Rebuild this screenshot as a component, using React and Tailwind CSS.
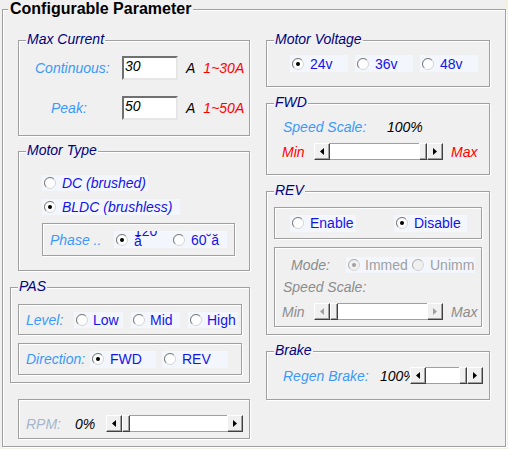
import React from 'react';

const Radio = ({ checked, disabled }) => (
  <svg width="12" height="12" viewBox="0 0 12 12" className="shrink-0">
    <circle cx="6" cy="6" r="5.5" fill={disabled ? '#f0f0f0' : '#fff'} stroke="#d4d4d4" />
    <path d="M2.1 9.9 A5.5 5.5 0 0 1 9.9 2.1" fill="none" stroke={disabled ? '#b4b4b4' : '#7a7a7a'} />
    {checked && <circle cx="6" cy="6" r="2" fill={disabled ? '#a0a0a0' : '#000'} />}
  </svg>
);

const Option = ({ className, checked, label, italic, gap = 'ml-[6px]' }) => (
  <div className={`flex items-center bg-[#f3f7fd] pl-[2px] ${className}`}>
    <Radio checked={checked} />
    <span className={`${gap} whitespace-nowrap text-[14px] leading-[16px] text-[#1414e6] ${italic ? 'italic' : ''}`}>{label}</span>
  </div>
);

const Box = ({ title, className = '', children }) => (
  <div className={`relative border border-[#a0a0a0] shadow-[1px_1px_0_#fff,inset_1px_1px_0_#fff] ${className}`}>
    {title && (
      <span className="absolute -top-[10px] left-[7px] bg-[#f0f0f0] px-[1px] text-[14px] italic leading-[16px] text-[#000080]">
        {title}
      </span>
    )}
    {children}
  </div>
);

const raised =
  'h-full shrink-0 border border-t-white border-l-white border-r-[#404040] border-b-[#404040] bg-[#f0f0f0] shadow-[inset_-1px_-1px_0_#a0a0a0]';

const Arrow = ({ dir, disabled }) => (
  <div className={`flex w-[16px] items-center justify-center ${raised}`}>
    <svg width="4" height="7" viewBox="0 0 4 7">
      <path d={dir === 'left' ? 'M4 0 L0 3.5 L4 7Z' : 'M0 0 L4 3.5 L0 7Z'} fill={disabled ? '#a0a0a0' : '#000'} />
    </svg>
  </div>
);

const Scroll = ({ className, thumb, disabled }) => (
  <div className={`relative flex h-[17px] ${className}`}>
    <Arrow dir="left" disabled={disabled} />
    {thumb === 'left' && <div className={`w-[8px] ${raised}`} />}
    <div className="flex-1 border-y border-[#a0a0a0] bg-white" />
    {thumb === 'right' && <div className={`w-[8px] ${raised}`} />}
    <Arrow dir="right" disabled={disabled} />
  </div>
);

const Field = ({ value }) => (
  <div className="h-[24px] w-[56px] border-2 border-t-[#707070] border-l-[#707070] border-r-[#e6e6e6] border-b-[#e6e6e6] bg-white pl-[1px] text-[14px] italic leading-[16px] text-black">
    {value}
  </div>
);

const label = 'text-[14px] italic leading-[16px] whitespace-nowrap';

export default function App() {
  return (
    <div className="h-[449px] w-[508px] border-r-2 border-b-2 border-[#f4f0de] bg-[#f0f0f0] pl-[2px] pt-[9px] font-['Liberation_Sans',Arial,sans-serif]">
      <div className="relative h-[438px] w-[504px] border border-[#a0a0a0] shadow-[1px_1px_0_#fff,inset_1px_1px_0_#fff]">
        <span className="absolute -top-[10px] left-[5px] bg-[#f0f0f0] px-[2px] text-[16px] font-bold leading-[18px] text-black">
          Configurable Parameter
        </span>

        <div className="flex pl-[7px] pt-[30px]">
          {/* left column */}
          <div className="flex w-[240px] flex-col">
            <Box title="Max Current" className="ml-[8px] h-[96px] w-[232px] pt-[15px]">
              <div className="flex h-[24px] items-center">
                <span className={`${label} w-[103px] pl-[16px] text-[#3b99fc]`}>Continuous:</span>
                <Field value="30" />
                <span className={`${label} ml-[8px] text-black`}>A</span>
                <span className={`${label} ml-[8px] text-[#ff0000]`}>1~30A</span>
              </div>
              <div className="mt-[16px] flex h-[24px] items-center">
                <span className={`${label} w-[103px] pl-[32px] text-[#3b99fc]`}>Peak:</span>
                <Field value="50" />
                <span className={`${label} ml-[8px] text-black`}>A</span>
                <span className={`${label} ml-[8px] text-[#ff0000]`}>1~50A</span>
              </div>
            </Box>

            <Box title="Motor Type" className="ml-[8px] mt-[15px] h-[120px] w-[232px] pl-[23px] pt-[23px]">
              <Option className="h-[16px] w-[106px]" italic label="DC (brushed)" />
              <Option className="mt-[8px] h-[16px] w-[138px]" italic checked label="BLDC (brushless)" />
              <Box className="mt-[8px] flex h-[33px] w-[193px] items-center pl-[7px]">
                <span className={`${label} w-[64px] text-[#3b99fc]`}>Phase ..</span>
                <div className="flex h-[17px] w-[113px] items-center overflow-hidden bg-[#f3f7fd] pl-[2px]">
                  <Radio checked />
                  <span className="ml-[6px] h-[17px] w-[26px] overflow-hidden text-[14px] text-[#1414e6]">
                    <span className="-mt-[5px] block leading-[10px]">
                      120
                      <br />
                      ă
                    </span>
                  </span>
                  <span className="ml-[13px]">
                    <Radio />
                  </span>
                  <span className="ml-[6px] whitespace-nowrap text-[14px] leading-[16px] text-[#1414e6]">60˘ă</span>
                </div>
              </Box>
            </Box>

            <Box title="PAS" className="mt-[16px] h-[96px] w-[240px] pl-[7px] pt-[16px]">
              <Box className="flex h-[31px] w-[224px] items-center gap-[8px] pl-[7px]">
                <span className={`${label} w-[40px] text-[#3b99fc]`}>Level:</span>
                <Option className="h-[16px] w-[49px]" gap="ml-[5px]" label="Low" />
                <Option className="h-[16px] w-[49px]" gap="ml-[5px]" label="Mid" />
                <Option className="h-[16px] w-[50px]" gap="ml-[5px]" label="High" />
              </Box>
              <Box className="mt-[8px] flex h-[32px] w-[224px] items-center pl-[7px]">
                <span className={`${label} w-[64px] text-[#3b99fc]`}>Direction:</span>
                <Option className="h-[17px] w-[66px]" checked label="FWD" />
                <Option className="ml-[6px] h-[17px] w-[66px]" label="REV" />
              </Box>
            </Box>

            <Box className="ml-[8px] mt-[16px] flex h-[40px] w-[232px] items-start pl-[7px] pt-[15px]">
              <div className="flex h-[17px] items-center">
                <span className={`${label} w-[49px] text-[#a6b6ce]`}>RPM:</span>
                <span className={`${label} w-[31px] text-black`}>0%</span>
                <Scroll className="w-[137px]" thumb="left" />
              </div>
            </Box>
          </div>

          {/* right column */}
          <div className="ml-[16px] flex w-[224px] flex-col">
            <Box title="Motor Voltage" className="flex h-[47px] w-[224px] items-start gap-[7px] pl-[23px] pt-[14px]">
              <Option className="h-[17px] w-[58px]" checked label="24v" />
              <Option className="h-[17px] w-[58px]" label="36v" />
              <Option className="h-[17px] w-[58px]" label="48v" />
            </Box>

            <Box title="FWD" className="mt-[16px] h-[72px] w-[224px] pt-[15px]">
              <div className="flex h-[16px] items-center pl-[16px]">
                <span className={`${label} w-[104px] text-[#3b99fc]`}>Speed Scale:</span>
                <span className={`${label} text-black`}>100%</span>
              </div>
              <div className="mt-[8px] flex h-[17px] items-center pl-[15px]">
                <span className={`${label} w-[32px] text-[#ff0000]`}>Min</span>
                <Scroll className="w-[129px]" thumb="right" />
                <span className={`${label} ml-[8px] text-[#ff0000]`}>Max</span>
              </div>
            </Box>

            <Box title="REV" className="mt-[16px] h-[144px] w-[224px] pl-[7px] pt-[15px]">
              <Box className="flex h-[32px] w-[208px] items-center pl-[15px]">
                <Option className="h-[17px] w-[66px]" label="Enable" />
                <Option className="ml-[38px] h-[17px] w-[73px]" checked label="Disable" />
              </Box>
              <Box className="mt-[8px] h-[80px] w-[208px] overflow-hidden pt-[9px]">
                <div className="flex h-[16px] items-center pl-[16px]">
                  <span className={`${label} w-[55px] text-[#8c8c8c]`}>Mode:</span>
                  <div className="flex h-[16px] w-[129px] items-center bg-[#f3f7fd] pl-[2px]">
                    <Radio checked disabled />
                    <span className="ml-[5px] w-[47px] text-[14px] leading-[16px] text-[#a0a0a0]">Immed</span>
                    <Radio disabled />
                    <span className="ml-[6px] text-[14px] leading-[16px] text-[#a0a0a0]">Unimm</span>
                  </div>
                </div>
                <div className="mt-[6px] flex h-[16px] items-center pl-[8px]">
                  <span className={`${label} text-[#8c8c8c]`}>Speed Scale:</span>
                </div>
                <div className="mt-[8px] flex h-[17px] items-center pl-[7px]">
                  <span className={`${label} w-[32px] text-[#8c8c8c]`}>Min</span>
                  <Scroll className="w-[129px]" thumb="left" disabled />
                  <span className={`${label} ml-[8px] text-[#8c8c8c]`}>Max</span>
                </div>
              </Box>
            </Box>

            <Box title="Brake" className="mt-[16px] h-[49px] w-[224px] pt-[15px]">
              <div className="flex h-[17px] items-center pl-[16px]">
                <span className={`${label} w-[97px] text-[#3b99fc]`}>Regen Brake:</span>
                <span className={`${label} w-[30px] text-black`}>100%</span>
                <Scroll className="w-[73px]" thumb="right" />
              </div>
            </Box>
          </div>
        </div>
      </div>
    </div>
  );
}
